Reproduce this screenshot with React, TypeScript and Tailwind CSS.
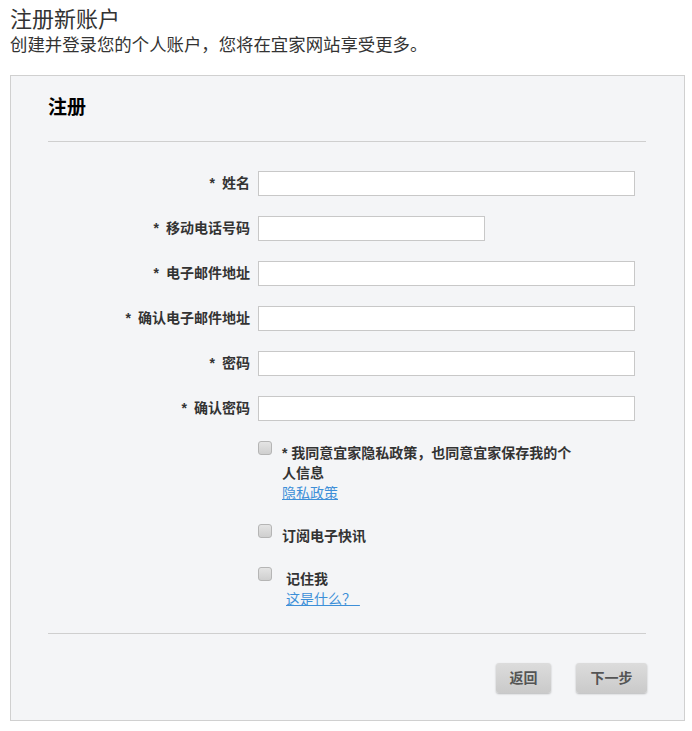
export default function App() {
  const fields = [
    { label: '姓名', short: false },
    { label: '移动电话号码', short: true },
    { label: '电子邮件地址', short: false },
    { label: '确认电子邮件地址', short: false },
    { label: '密码', short: false },
    { label: '确认密码', short: false },
  ];

  return (
    <div className="min-h-screen bg-white px-[10px] pt-[6px] pb-[10px] font-['Liberation_Sans','Noto_Sans_CJK_SC',sans-serif] text-[#333]">
      {/* Page title */}
      <h1 className="text-[22px] leading-[28px] font-normal text-[#333]">注册新账户</h1>
      <p className="text-[17.4px] leading-[22px] text-[#333]">
        创建并登录您的个人账户，您将在宜家网站享受更多。
      </p>

      {/* Form panel */}
      <section className="mt-[19px] w-[675px] border border-[#d0d0d0] bg-[#f4f5f7] px-[37px] pt-[20px] pb-[27px]">
        <h2 className="text-[19px] leading-[24px] font-bold text-black">注册</h2>
        <div className="mt-[21px] h-px w-[598px] bg-[#cfcfcf]" />

        <div className="mt-[29px] flex flex-col gap-[20px]">
          {fields.map((f) => (
            <div key={f.label} className="flex items-center gap-[8px]">
              <label className="w-[202px] text-right text-[14px] font-bold leading-[25px] text-[#333]">
                <span className="mr-[7px]">*</span>
                {f.label}
              </label>
              <input
                type="text"
                className={
                  'h-[25px] border border-[#c8c8c8] bg-white outline-none ' +
                  (f.short ? 'w-[227px]' : 'w-[377px]')
                }
              />
            </div>
          ))}
        </div>

        {/* Checkboxes */}
        <div className="mt-[20px] ml-[210px] flex flex-col text-[14px] font-bold leading-[20px] text-[#333]">
          <div className="flex items-start gap-[10px]">
            <span className="h-[14px] w-[14px] shrink-0 rounded-[3px] border border-[#b5b5b5] bg-gradient-to-b from-[#e4e4e4] to-[#cfcfcf]" />
            <div className="w-[294px] pt-[2px]">
              <p>* 我同意宜家隐私政策，也同意宜家保存我的个人信息</p>
              <a href="#" className="font-normal text-[#3d8fd8] underline">
                隐私政策
              </a>
            </div>
          </div>

          <div className="mt-[21px] flex items-start gap-[10px]">
            <span className="h-[14px] w-[14px] shrink-0 rounded-[3px] border border-[#b5b5b5] bg-gradient-to-b from-[#e4e4e4] to-[#cfcfcf]" />
            <p className="pt-[2px]">订阅电子快讯</p>
          </div>

          <div className="mt-[21px] flex items-start gap-[10px]">
            <span className="h-[14px] w-[14px] shrink-0 rounded-[3px] border border-[#b5b5b5] bg-gradient-to-b from-[#e4e4e4] to-[#cfcfcf]" />
            <div className="pt-[2px] pl-[4px]">
              <p>记住我</p>
              <a href="#" className="font-normal text-[#3d8fd8] underline">
                这是什么？&nbsp;
              </a>
            </div>
          </div>
        </div>

        <div className="mt-[24px] h-px w-[598px] bg-[#cfcfcf]" />

        {/* Buttons */}
        <div className="mt-[29px] flex w-[599px] justify-end gap-[25px]">
          <button className="h-[30px] w-[55px] rounded-[3px] bg-gradient-to-b from-[#dcdcdc] to-[#cacaca] text-[14px] font-bold text-[#555] shadow-[0_1px_2px_rgba(0,0,0,0.25)]">
            返回
          </button>
          <button className="h-[30px] w-[71px] rounded-[3px] bg-gradient-to-b from-[#dcdcdc] to-[#cacaca] text-[14px] font-bold text-[#555] shadow-[0_1px_2px_rgba(0,0,0,0.25)]">
            下一步
          </button>
        </div>
      </section>
    </div>
  );
}
